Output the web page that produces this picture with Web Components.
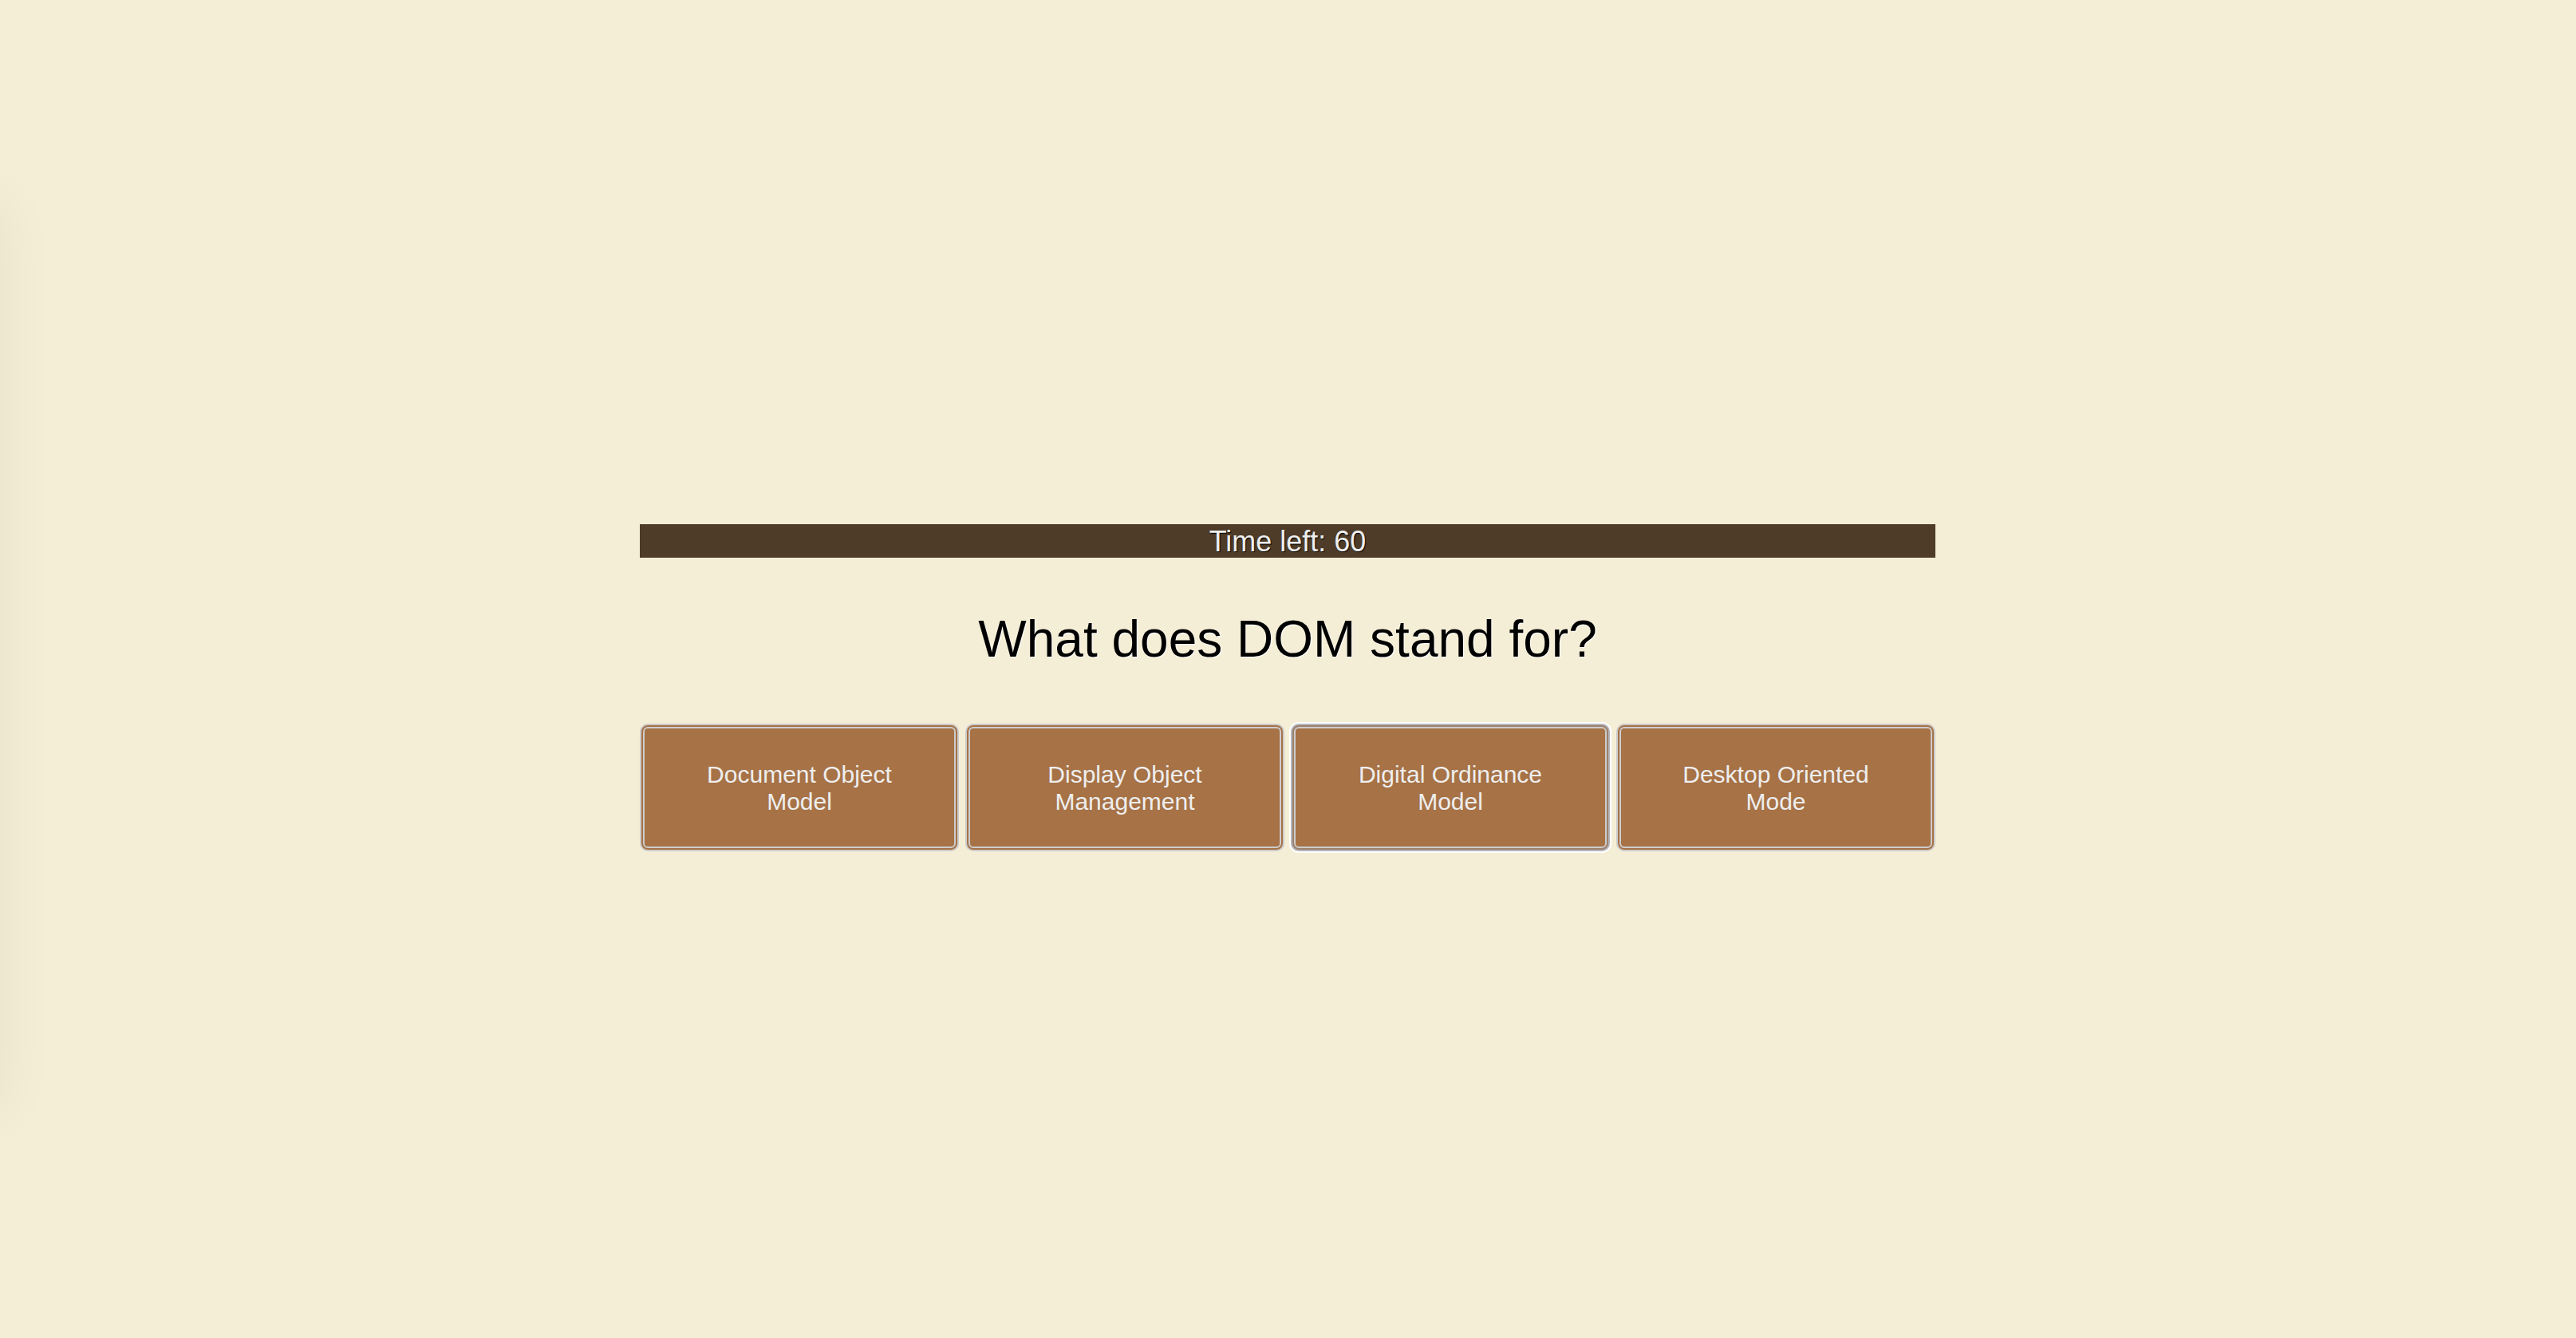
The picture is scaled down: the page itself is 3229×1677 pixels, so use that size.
<!DOCTYPE html>
<html lang="en">
<head>
<meta charset="utf-8">
<title>Code Quiz</title>
<style>
html, body { height: 100%; margin: 0; }
body { background: #f5eed6; font-family: "Liberation Sans", Arial, sans-serif; overflow: hidden; }
</style>
</head>
<body>
<quiz-app></quiz-app>
<script>
class QuizTimer extends HTMLElement {
  constructor() {
    super();
    this.attachShadow({ mode: "open" }).innerHTML = `
      <style>
        :host { display: block; background: #4e3c28; color: #eee; text-align: center; padding-top: 2px;
          font-size: 36px; line-height: 40px; text-shadow: 1px 1px 1px #000; }
      </style>
      <slot></slot>`;
  }
}
customElements.define("quiz-timer", QuizTimer);

class QuizChoice extends HTMLElement {
  constructor() {
    super();
    this.attachShadow({ mode: "open" }).innerHTML = `
      <style>
        :host { display: flex; flex: 1 1 0; }
        button { flex: 1; box-sizing: border-box; margin: 0; padding: 41px 60px 39px; min-height: 160px;
          border: 6px double #ccc; border-radius: 10px; background: #a67246; color: #eee;
          font: inherit; font-size: 30px; line-height: 34px; text-align: center; cursor: pointer; outline: none; }
        :host([current]) button { box-shadow: 0 0 0 2px #fff;
          outline: 4px solid rgba(145, 150, 165, 0.4); outline-offset: -4px; }
      </style>
      <button type="button"><slot></slot></button>`;
  }
}
customElements.define("quiz-choice", QuizChoice);

class QuizDrawer extends HTMLElement {
  constructor() {
    super();
    this.attachShadow({ mode: "open" }).innerHTML = `
      <style>
        :host { position: absolute; right: 100%; top: 15%; bottom: 17%; width: 25%;
          box-shadow: 0 0 72px rgba(0, 0, 0, 0.06); }
      </style>`;
  }
}
customElements.define("quiz-drawer", QuizDrawer);

class QuizApp extends HTMLElement {
  constructor() {
    super();
    this.attachShadow({ mode: "open" }).innerHTML = `
      <style>
        :host { display: flex; position: relative; height: 100%; align-items: center; justify-content: center; overflow: hidden; }
        main { width: 100%; max-width: 1624px; padding: 47px 1px 0 0; }
        h1 { margin: 65px 0 68px; font-size: 64px; line-height: 75px; font-weight: 400; text-align: center;
          color: #000; text-shadow: 1px 1px 1px #fff; }
        .choices { display: flex; gap: 8px; }
      </style>
      <quiz-drawer></quiz-drawer>
      <main>
        <quiz-timer>Time left: 60</quiz-timer>
        <h1>What does DOM stand for?</h1>
        <div class="choices">
          <quiz-choice>Document Object Model</quiz-choice>
          <quiz-choice>Display Object Management</quiz-choice>
          <quiz-choice current>Digital Ordinance Model</quiz-choice>
          <quiz-choice>Desktop Oriented Mode</quiz-choice>
        </div>
      </main>`;
  }
}
customElements.define("quiz-app", QuizApp);
</script>
</body>
</html>
